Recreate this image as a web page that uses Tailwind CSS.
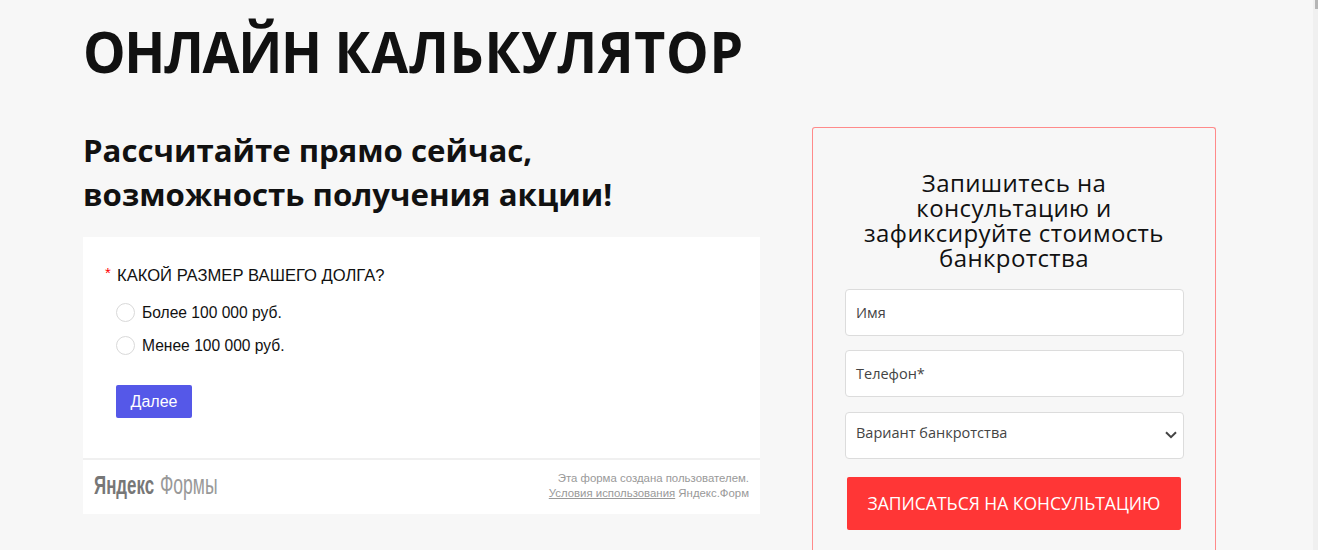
<!DOCTYPE html>
<html lang="ru">
<head>
    <meta charset="UTF-8">
    <meta name="viewport" content="width=device-width, initial-scale=1.0">
    <title>Онлайн калькулятор</title>
    <script src="https://cdn.jsdelivr.net/npm/@tailwindcss/browser@4"></script>
</head>
<body class="bg-[#f7f7f7] h-[550px] overflow-hidden font-['Open_Sans',sans-serif] text-[#111]">
    <div class="flex h-[550px] overflow-hidden">
        <div class="flex-1 min-w-0 pl-[83px] flex items-start">
            <!-- левая колонка -->
            <div class="w-[677px] shrink-0">
                <h1 class="text-[58px] leading-[60px] font-bold pt-[21px] whitespace-nowrap origin-left scale-x-[0.925]"><span class="tracking-[-1.5px]">ОНЛАЙН</span> <span class="tracking-[0.7px]">КАЛЬКУЛЯТОР</span></h1>
                <h2 class="text-[31.2px] leading-[44px] font-bold mt-[47px]">Рассчитайте прямо сейчас,<br>возможность получения акции!</h2>

                <!-- форма -->
                <div class="bg-white mt-[21px] font-['Liberation_Sans',sans-serif]">
                    <div class="h-[221px] pt-[28px] pl-[22px]">
                        <div class="flex items-start text-[16.6px] leading-[22px]">
                            <span class="text-[#ff0000] w-[12px] text-[15px] leading-[16px]">*</span>
                            <span>КАКОЙ РАЗМЕР ВАШЕГО ДОЛГА?</span>
                        </div>
                        <div class="flex items-center mt-[16px] ml-[11px] h-[20px] text-[15.6px]">
                            <span class="w-[19px] h-[19px] -mt-[2px] rounded-full border border-[#d9d9d9] bg-white"></span>
                            <span class="ml-[7px]">Более 100 000 руб.</span>
                        </div>
                        <div class="flex items-center mt-[13px] ml-[11px] h-[20px] text-[15.6px]">
                            <span class="w-[19px] h-[19px] -mt-[2px] rounded-full border border-[#d9d9d9] bg-white"></span>
                            <span class="ml-[7px]">Менее 100 000 руб.</span>
                        </div>
                        <button class="block mt-[29px] ml-[11px] w-[76px] h-[33px] bg-[#5558e8] rounded-[2px] text-white text-[16px]">Далее</button>
                    </div>
                    <div class="h-[56px] border-t-2 border-[#f0f0f0] flex items-center justify-between pl-[11px] pr-[11px] pb-[3px]">
                        <div class="flex items-baseline text-[26px] leading-[30px] whitespace-nowrap w-[130px] -mt-[2px]">
                            <span class="font-bold text-[#777] origin-left scale-x-[0.65] w-[66px]">Яндекс</span>
                            <span class="text-[#999] text-[27px] font-normal origin-left scale-x-[0.65]">Формы</span>
                        </div>
                        <div class="text-right text-[11.4px] leading-[15px] text-[#999]">
                            <div>Эта форма создана пользователем.</div>
                            <div><a href="#" class="underline">Условия использования</a> Яндекс.Форм</div>
                        </div>
                    </div>
                </div>
            </div>

            <!-- правая колонка -->
            <div class="w-[404px] shrink-0 ml-[52px] mt-[127px] h-[423px] border border-b-0 border-[#ff8a8a] rounded-t-[3px] px-[32px] pt-[42px]">
                <h3 class="text-[24px] leading-[25px] text-center tracking-[0.4px] px-[10px]">Запишитесь на консультацию и зафиксируйте стоимость банкротства</h3>
                <div class="mt-[19px] w-[339px] h-[47px] bg-white border border-[#dcdcdc] rounded-[4px] px-[10px] flex items-center text-[14.5px] text-[#444]">Имя</div>
                <div class="mt-[14px] w-[339px] h-[47px] bg-white border border-[#dcdcdc] rounded-[4px] px-[10px] flex items-center text-[14.5px] text-[#444]">Телефон*</div>
                <div class="mt-[15px] w-[339px] h-[47px] bg-white border border-[#dcdcdc] rounded-[4px] pl-[10px] pr-[6px] flex items-center justify-between text-[14.5px] text-[#444]">
                    <span class="-mt-[5px]">Вариант банкротства</span>
                    <svg class="w-[12px] h-[8px] -mt-[1px]" viewBox="0 0 12 8" fill="none" stroke="#444" stroke-width="2"><path d="M1 1.2 6 6.2 11 1.2"/></svg>
                </div>
                <button class="block mt-[18px] ml-[2px] w-[334px] h-[53px] bg-[#ff3636] rounded-[2px] text-white text-[17.5px]">ЗАПИСАТЬСЯ НА КОНСУЛЬТАЦИЮ</button>
            </div>
        </div>

        <!-- полоса прокрутки -->
        <div class="w-[5px] shrink-0 bg-[#f0f0f0] relative">
            <div class="absolute top-0 right-0 w-[3px] h-[9px] bg-[#b5b5b5]"></div>
        </div>
    </div>
</body>
</html>
